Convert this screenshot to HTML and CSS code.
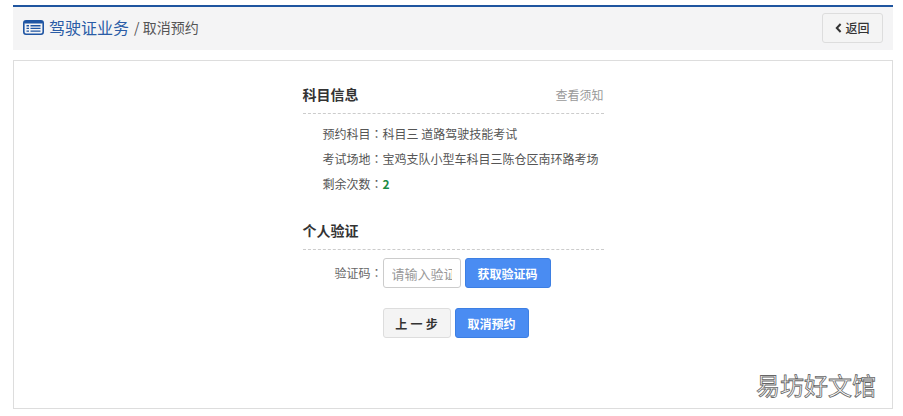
FILE: index.html
```html
<!DOCTYPE html>
<html lang="zh-CN">
<head>
<meta charset="utf-8">
<title>取消预约</title>
<link rel="stylesheet" href="styles.css">
</head>
<body>
<header class="topbar">
  <div class="crumbs">
    <svg class="crumb-icon" viewBox="0 0 21 15" width="21" height="15" aria-hidden="true">
      <rect x="0.8" y="0.8" width="19.4" height="13.4" rx="2.2" fill="none" stroke="#1f55a3" stroke-width="1.6"/>
      <rect x="1" y="1" width="19" height="2.4" rx="1" fill="#1f55a3"/>
      <path d="M3.5 5.7h2.5M7.5 5.7h10M3.5 8.4h2.5M7.5 8.4h10M3.5 11.1h2.5M7.5 11.1h10" stroke="#1f55a3" stroke-width="1.4" fill="none"/>
    </svg>
    <span class="crumb-main">驾驶证业务</span>
    <span class="crumb-sub">/ 取消预约</span>
  </div>
  <button class="back" type="button">
    <svg viewBox="0 0 7 10" width="7" height="10" aria-hidden="true"><path d="M5.6 1 1.8 5l3.8 4" fill="none" stroke="#333" stroke-width="2"/></svg>
    返回
  </button>
</header>
<main class="panel">
  <div class="column">
    <div class="sec-head">
      <h2>科目信息</h2>
      <a class="notice">查看须知</a>
    </div>
    <ul class="info">
      <li>预约科目<span class="colon">：</span>科目三 道路驾驶技能考试</li>
      <li>考试场地<span class="colon">：</span>宝鸡支队小型车科目三陈仓区南环路考场</li>
      <li>剩余次数<span class="colon">：</span><b class="count">2</b></li>
    </ul>
    <div class="sec-head second">
      <h2>个人验证</h2>
    </div>
    <div class="code-row">
      <label class="code-label" for="code">验证码<span class="colon">：</span></label>
      <input id="code" class="code-input" type="text" placeholder="请输入验证码">
      <button class="btn primary get-code" type="button">获取验证码</button>
    </div>
    <div class="actions">
      <button class="btn plain" type="button">上 一 步</button>
      <button class="btn primary cancel" type="button">取消预约</button>
    </div>
  </div>
  <div class="watermark">易坊好文馆</div>
</main>
</body>
</html>
```

FILE: styles.css
```css
* { box-sizing: border-box; }
html, body { margin: 0; height: 100%; background: #fff; }
body {
  width: 903px;
  height: 416px;
  overflow: hidden;
  padding: 5px 10px 0 13px;
  font-family: "Noto Sans CJK SC", "Liberation Sans", sans-serif;
  font-size: 12px;
  color: #555;
}
.topbar {
  height: 45px;
  background: #f4f4f5;
  border-top: 2px solid #1f559f;
  display: flex;
  align-items: center;
  justify-content: space-between;
  padding: 0 10px;
}
.crumbs { display: flex; align-items: center; padding-bottom: 3px; }
.crumb-icon { margin-right: 5px; margin-top: 1px; }
.crumb-main { font-size: 16px; color: #2a5ca6; margin-right: 5px; }
.crumb-sub { font-size: 14px; color: #555; }
.back {
  width: 61px;
  height: 30px;
  margin-bottom: 2px;
  border: 1px solid #ddd;
  border-radius: 3px;
  background: #f4f4f4;
  color: #333;
  font: 500 12px "Noto Sans CJK SC", sans-serif;
  display: flex;
  align-items: center;
  justify-content: center;
  gap: 3px;
  padding: 0;
}
.panel {
  position: relative;
  margin-top: 10px;
  width: 880px;
  height: 349px;
  border: 1px solid #ddd;
  background: #fff;
}
.column { width: 301px; margin: 0 auto; padding-top: 20px; }
.sec-head {
  height: 33px;
  border-bottom: 1px dashed #ccc;
  display: flex;
  align-items: flex-start;
  justify-content: space-between;
}
.sec-head.second { margin-top: 21px; height: 33px; }
.sec-head h2 { margin: 0; font-size: 14px; line-height: 26px; font-weight: 700; color: #333; }
.notice { font-size: 12px; line-height: 28px; color: #999; }
.info { list-style: none; margin: 0; padding: 7px 0 0 20px; }
.info li { height: 25px; line-height: 25px; white-space: nowrap; color: #555; font-size: 12px; }
.colon { font-family: "Noto Sans CJK TC", sans-serif; font-feature-settings: "locl" 0; }
.count { color: #1c8b45; font-weight: 700; }
.code-row { display: flex; align-items: center; margin-top: 8px; }
.code-label { width: 80px; text-align: right; color: #666; font-size: 12px; margin-bottom: 2px; }
.code-input {
  width: 78px;
  height: 30px;
  border: 1px solid #ccc;
  border-radius: 3px;
  padding: 0 8px;
  font: 13px "Noto Sans CJK SC", sans-serif;
  outline: none;
  background: #fff;
}
.code-input::placeholder { color: #999; opacity: 1; }
.btn {
  height: 30px;
  border-radius: 3px;
  font: 700 12px "Noto Sans CJK SC", sans-serif;
  padding: 0;
}
.primary { background: #4a8cf2; border: 1px solid #3d7fe3; color: #fff; }
.plain { background: #f4f4f4; border: 1px solid #ddd; color: #333; word-spacing: 0.5px; }
.get-code { width: 86px; margin-left: 4px; }
.actions { display: flex; margin: 20px 0 0 80px; }
.actions .plain { width: 68px; }
.cancel { width: 74px; margin-left: 4px; }
.watermark {
  position: absolute;
  right: 16px;
  bottom: 9px;
  font-size: 24px;
  line-height: 28px;
  font-weight: 400;
  color: #fff;
  -webkit-text-stroke: 0.8px #666;
}
```
